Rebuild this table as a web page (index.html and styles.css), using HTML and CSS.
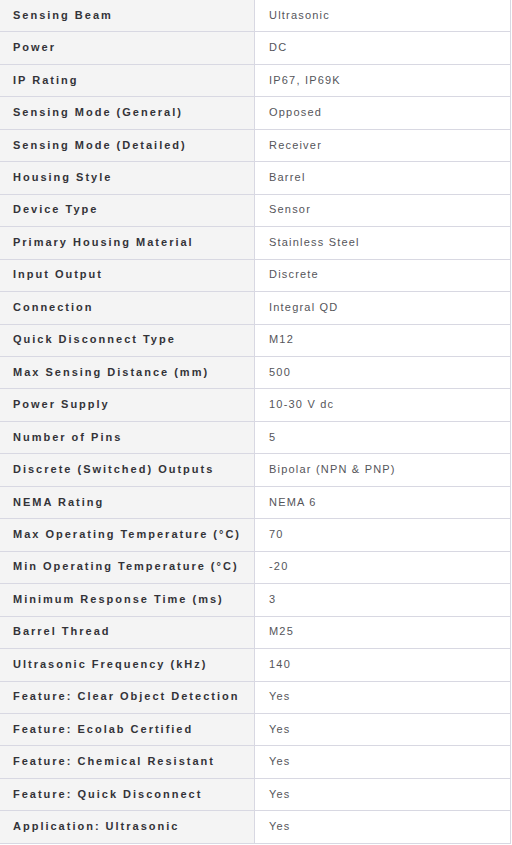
FILE: index.html
```html
<!DOCTYPE html>
<html lang="en">
<head>
<meta charset="utf-8">
<title>Specifications</title>
<link rel="stylesheet" href="styles.css">
</head>
<body>
<table class="specs">
<tbody>
<tr><th>Sensing Beam</th><td>Ultrasonic</td></tr>
<tr><th>Power</th><td>DC</td></tr>
<tr><th>IP Rating</th><td>IP67, IP69K</td></tr>
<tr><th>Sensing Mode (General)</th><td>Opposed</td></tr>
<tr><th>Sensing Mode (Detailed)</th><td>Receiver</td></tr>
<tr><th>Housing Style</th><td>Barrel</td></tr>
<tr><th>Device Type</th><td>Sensor</td></tr>
<tr><th>Primary Housing Material</th><td>Stainless Steel</td></tr>
<tr><th>Input Output</th><td>Discrete</td></tr>
<tr><th>Connection</th><td>Integral QD</td></tr>
<tr><th>Quick Disconnect Type</th><td>M12</td></tr>
<tr><th>Max Sensing Distance (mm)</th><td>500</td></tr>
<tr><th>Power Supply</th><td>10-30 V dc</td></tr>
<tr><th>Number of Pins</th><td>5</td></tr>
<tr><th>Discrete (Switched) Outputs</th><td>Bipolar (NPN &amp; PNP)</td></tr>
<tr><th>NEMA Rating</th><td>NEMA 6</td></tr>
<tr><th>Max Operating Temperature (°C)</th><td>70</td></tr>
<tr><th>Min Operating Temperature (°C)</th><td>-20</td></tr>
<tr><th>Minimum Response Time (ms)</th><td>3</td></tr>
<tr><th>Barrel Thread</th><td>M25</td></tr>
<tr><th>Ultrasonic Frequency (kHz)</th><td>140</td></tr>
<tr><th>Feature: Clear Object Detection</th><td>Yes</td></tr>
<tr><th>Feature: Ecolab Certified</th><td>Yes</td></tr>
<tr><th>Feature: Chemical Resistant</th><td>Yes</td></tr>
<tr><th>Feature: Quick Disconnect</th><td>Yes</td></tr>
<tr><th>Application: Ultrasonic</th><td>Yes</td></tr>
</tbody>
</table>
</body>
</html>
```
FILE: styles.css
```css
html, body {
  margin: 0;
  padding: 0;
  background: #ffffff;
}
.specs {
  width: 511px;
  border-collapse: separate;
  border-spacing: 0;
  font-family: "Liberation Sans", Arial, sans-serif;
  font-size: 11px;
  border-right: 1px solid #d8d8e2;
}
.specs th,
.specs td {
  box-sizing: border-box;
  height: 32.46px;
  padding: 0 0 2px 13px;
  text-align: left;
  vertical-align: middle;
  border-bottom: 1px solid #d8d8e2;
}
.specs th {
  width: 255px;
  background: #f4f4f4;
  color: #333338;
  font-weight: bold;
  letter-spacing: 2px;
  border-right: 1px solid #d8d8e2;
}
.specs td {
  padding-left: 14px;
  color: #55555a;
  font-weight: normal;
  letter-spacing: 1.2px;
}
```
